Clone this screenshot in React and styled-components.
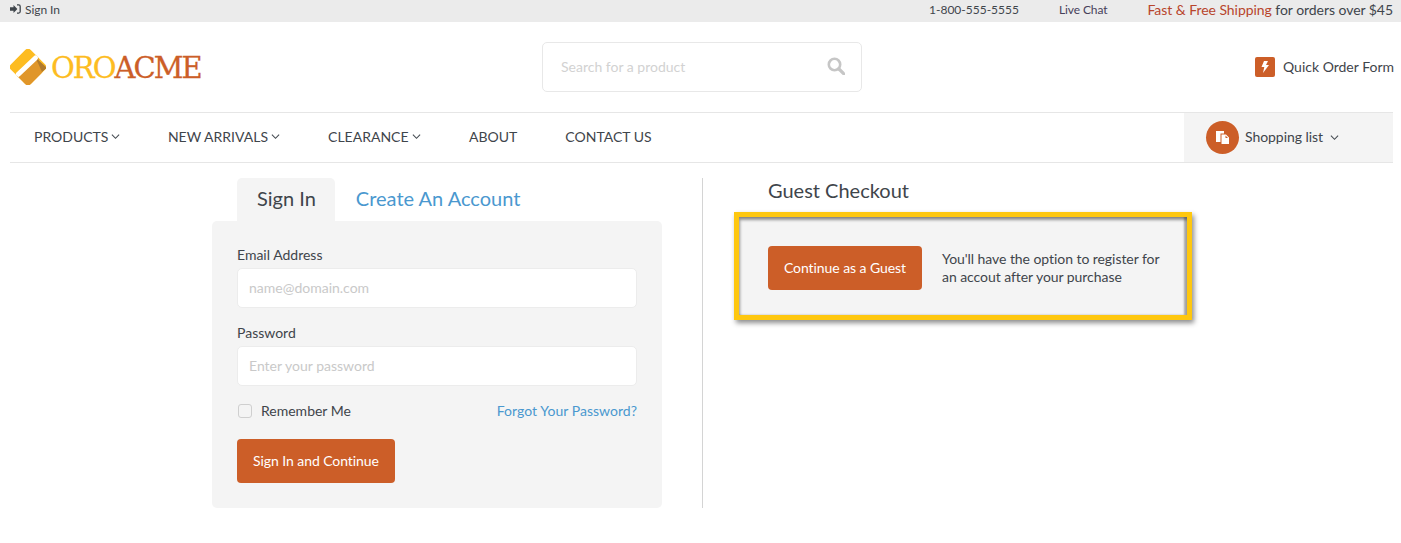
import React from "react";
import styled, { createGlobalStyle } from "styled-components";

const Global = createGlobalStyle`
  * { box-sizing: border-box; }
  html, body { margin: 0; padding: 0; background: #fff; }
  body { font-family: Lato, "Open Sans", sans-serif; color: #444a50; font-size: 14px; }
`;
const Page = styled.div`width: 1401px; height: 543px; overflow: hidden; background: #fff;`;
const TopBar = styled.div`
  height: 22px; background: #ebebeb; display: flex; align-items: center;
  padding: 0 8px 4px 10px; font-size: 12px; color: #3f454b;
`;
const SignInLink = styled.span`display: flex; align-items: center; gap: 4px; letter-spacing: -0.05px;`;
const TopRight = styled.div`margin-left: auto; display: flex; align-items: center;`;
const Phone = styled.span`font-size: 12px; margin-right: 40px;`;
const Chat = styled.span`font-size: 12px; margin-right: 40px; color: #46405a; letter-spacing: -0.1px;`;
const Promo = styled.span`font-size: 14px; color: #3f454b; letter-spacing: -0.05px;`;
const PromoAccent = styled.span`color: #b8452c;`;
const Header = styled.header`height: 90px; display: flex; align-items: center; padding: 0 7px 0 10px;`;
const Logo = styled.div`width: 532px; display: flex; align-items: center; gap: 5px;`;
const LogoText = styled.span`
  font-family: "DejaVu Serif", serif; font-size: 29px; font-weight: 400; letter-spacing: -1.95px;
  color: #cc5e28; line-height: 1; padding-top: 3px; -webkit-text-stroke: 0.3px currentColor;
`;
const LogoAccent = styled.span`color: #fdbc21;`;
const SearchBox = styled.div`
  width: 320px; height: 50px; border: 1px solid #e8e8e8; border-radius: 5px; display: flex;
  align-items: center; justify-content: space-between; padding: 0 16px 2px 18px;
  color: #d2d2d2; font-size: 14px;
`;
const QuickOrder = styled.div`margin-left: auto; display: flex; align-items: center; gap: 8px; font-size: 14px; color: #3f454b;`;
const QuickLabel = styled.span`padding-bottom: 2px;`;
const QuickIcon = styled.span`
  width: 20px; height: 20px; background: #cc5e28; border-radius: 2px; display: flex;
  align-items: center; justify-content: center;
`;
const Nav = styled.nav`
  margin: 0 8px 0 10px; height: 51px; border-top: 1px solid #e6e6e6; border-bottom: 1px solid #e6e6e6;
  display: flex; align-items: center; padding-left: 24px;
`;
const NavItem = styled.span`
  display: flex; align-items: center; gap: 3px; margin-right: 48px; font-size: 14px; color: #3f454b;
  padding-bottom: 2px;
  &:nth-child(1) { margin-right: 47.5px; }
  &:nth-child(3) { margin-right: 48.5px; }
`;
const ListBtn = styled.div`
  margin-left: auto; width: 209px; height: 49px; background: #f4f4f4; display: flex;
  align-items: center; padding-left: 22px; gap: 6px; font-size: 14px; color: #3f454b;
`;
const ListLabel = styled.span`padding-bottom: 2px; letter-spacing: -0.05px; margin-right: 1px;`;
const ListIcon = styled.span`
  width: 33px; height: 33px; border-radius: 50%; background: #cc5e28; display: flex;
  align-items: center; justify-content: center;
`;
const Main = styled.main`display: flex; padding: 15px 0 0 212px; align-items: flex-start;`;
const Left = styled.section`width: 450px;`;
const Tabs = styled.div`display: flex; gap: 1px; padding-left: 25px; align-items: flex-end;`;
const Tab = styled.div`
  height: 43px; display: flex; align-items: center; font-size: 20px; padding: 0 19px 4px 20px;
  border-radius: 5px 5px 0 0; color: ${p => (p.$active ? "#3f454b" : "#4a98cf")};
  background: ${p => (p.$active ? "#f4f4f4" : "transparent")};
`;
const Panel = styled.div`
  background: #f4f4f4; height: 287px; border-radius: 5px; padding: 25px 25px 0;
`;
const Label = styled.label`display: block; font-size: 14px; line-height: 17px; color: #3f454b; margin-bottom: 5px;`;
const InputBox = styled.div`
  height: 40px; background: #fff; border: 1px solid #ececec; border-radius: 5px; display: flex;
  align-items: center; padding: 0 0 2px 11px; color: #c9c9c9; font-size: 14px;
  margin-bottom: ${p => p.$mb}px;
`;
const Options = styled.div`display: flex; align-items: center; justify-content: space-between; height: 18px;`;
const Remember = styled.span`display: flex; align-items: center; gap: 9px; padding-left: 1px; font-size: 14px; color: #3f454b;`;
const Check = styled.span`width: 14px; height: 14px; margin-top: 2px; border: 1px solid #cfcfcf; border-radius: 3px; background: #f4f4f4;`;
const Forgot = styled.span`color: #4a98cf; font-size: 14px; letter-spacing: 0.03px;`;
const Button = styled.div`
  display: flex; align-items: center; justify-content: center; height: 44px; width: ${p => p.$w}px;
  background: #cc5e28; color: #fff; border-radius: 4px; font-size: 14px; flex: none;
  padding-bottom: 2px; letter-spacing: -0.07px;
  margin-top: ${p => p.$mt || 0}px;
`;
const Divider = styled.div`width: 1px; height: 330px; background: #d4d4d4; margin-left: 40px;`;
const Right = styled.section`margin-left: 31px; width: 458px;`;
const GuestTitle = styled.h2`
  margin: 0 0 0 34px; font-weight: 400; font-size: 20px; line-height: 24px; color: #3f454b;
`;
const Highlight = styled.div`
  margin-top: 10px; height: 108px; border: 5px solid #fec70f; background: #f4f4f4;
  box-shadow: 2px 3px 5px rgba(0,0,0,.45), inset 1px 3px 3px rgba(0,0,0,.4), inset -3px 0 2px rgba(0,0,0,.3);
  display: flex; align-items: center; padding: 4px 0 0 29px; gap: 20px;
`;
const GuestNote = styled.p`margin: 0; font-size: 14px; line-height: 18px; color: #3f454b; white-space: pre-line; letter-spacing: -0.06px;`;

const Chevron = () => (
  <svg width="9" height="9" viewBox="0 0 10 10" fill="none" stroke="#444a50" strokeWidth="1.2"><path d="M1 3l4 4 4-4" /></svg>
);

const LogoMark = () => (
  <svg width="36" height="36" viewBox="0 0 36 36">
    <defs>
      <clipPath id="diamond"><rect x="4" y="4" width="28" height="28" rx="4" transform="rotate(45 18 18)" /></clipPath>
    </defs>
    <g clipPath="url(#diamond)">
      <rect width="36" height="36" fill="#fdbc21" />
      <path fill="#e0962a" d="M28 8L36 36H0L8 26z" />
      <path fill="#b07a2c" d="M25 8L37 19L32 23L28 14z" />
      <path stroke="#fff" strokeWidth="5" strokeLinecap="round" d="M8 25.5L25.5 9" />
    </g>
  </svg>
);

export default function App() {
  return (
    <Page>
      <Global />
      <TopBar>
        <SignInLink>
          <svg width="11" height="10" viewBox="0 0 11 10"><path fill="#3f454b" d="M0 3.2h3.5V1L7.4 5 3.5 9V6.8H0z" /><path fill="none" stroke="#3f454b" strokeWidth="1.3" d="M7 .9h1.7c.9 0 1.5.6 1.5 1.5v5.2c0 .9-.6 1.5-1.5 1.5H7" /></svg>
          Sign In
        </SignInLink>
        <TopRight>
          <Phone>1-800-555-5555</Phone>
          <Chat>Live Chat</Chat>
          <Promo><PromoAccent>Fast &amp; Free Shipping</PromoAccent> for orders over $45</Promo>
        </TopRight>
      </TopBar>
      <Header>
        <Logo>
          <LogoMark />
          <LogoText><LogoAccent>ORO</LogoAccent>ACME</LogoText>
        </Logo>
        <SearchBox>
          Search for a product
          <svg width="18" height="18" viewBox="0 0 18 18" fill="none" stroke="#c6c6c6"><circle cx="7.5" cy="7.5" r="5.7" strokeWidth="2.6" /><path d="M12 12l5 5" strokeWidth="3.2" strokeLinecap="round" /></svg>
        </SearchBox>
        <QuickOrder>
          <QuickIcon>
            <svg width="8" height="12" viewBox="0 0 8 12"><path fill="#fff" d="M3 0h4L5 4h3L2 12l1.3-6H.5z" /></svg>
          </QuickIcon>
          <QuickLabel>Quick Order Form</QuickLabel>
        </QuickOrder>
      </Header>
      <Nav>
        <NavItem>PRODUCTS <Chevron /></NavItem>
        <NavItem>NEW ARRIVALS <Chevron /></NavItem>
        <NavItem>CLEARANCE <Chevron /></NavItem>
        <NavItem>ABOUT</NavItem>
        <NavItem>CONTACT US</NavItem>
        <ListBtn>
          <ListIcon>
            <svg width="15" height="15" viewBox="0 0 15 15"><path fill="#fff" d="M1 1h8v2.5H5.5V12H1zM6.5 4.5H11l3 3V14H6.5zM10.5 5.5v2.5H13z" fillRule="evenodd" /></svg>
          </ListIcon>
          <ListLabel>Shopping list</ListLabel>
          <Chevron />
        </ListBtn>
      </Nav>
      <Main>
        <Left>
          <Tabs>
            <Tab $active>Sign In</Tab>
            <Tab>Create An Account</Tab>
          </Tabs>
          <Panel>
            <Label>Email Address</Label>
            <InputBox $mb={16}>name@domain.com</InputBox>
            <Label>Password</Label>
            <InputBox $mb={15}>Enter your password</InputBox>
            <Options>
              <Remember><Check />Remember Me</Remember>
              <Forgot>Forgot Your Password?</Forgot>
            </Options>
            <Button $w={158} $mt={20}>Sign In and Continue</Button>
          </Panel>
        </Left>
        <Divider />
        <Right>
          <GuestTitle>Guest Checkout</GuestTitle>
          <Highlight>
            <Button $w={154}>Continue as a Guest</Button>
            <GuestNote>{"You'll have the option to register for\nan accout after your purchase"}</GuestNote>
          </Highlight>
        </Right>
      </Main>
    </Page>
  );
}
